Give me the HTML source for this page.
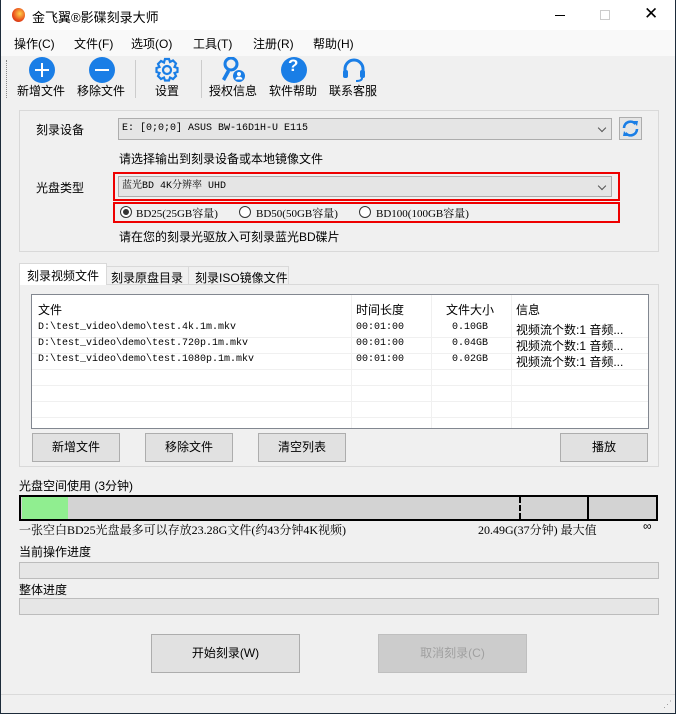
<!DOCTYPE html>
<html><head><meta charset="utf-8"><style>
*{margin:0;padding:0;box-sizing:border-box}
body{width:676px;height:714px;background:#1d2b3a;font-family:"Liberation Sans","Noto Sans CJK SC",sans-serif;font-size:12px;color:#000;overflow:hidden;position:relative}
.win{position:absolute;left:1px;top:0;width:674px;height:713px;background:#f0f0f0}
.a{position:absolute;white-space:nowrap}
.box{position:absolute;border:1px solid #d9d9d9}
.combo{position:absolute;background:#e5e5e5;border:1px solid #adadad;font-family:"Liberation Mono","Noto Serif CJK SC",monospace;font-size:10px;line-height:20px;padding-left:3px}
.combo:after{content:"";position:absolute;right:6px;top:6px;width:5px;height:5px;border-right:1px solid #555;border-bottom:1px solid #555;transform:rotate(45deg)}
.btn{position:absolute;background:#e1e1e1;border:1px solid #adadad;text-align:center;font-size:12px}
.ic{position:absolute;width:26px;height:26px;border-radius:50%;background:#1a7ee6}
.tl{position:absolute;font-size:12px;text-align:center;width:60px}
.radio{position:absolute;width:12px;height:12px;border:1px solid #333;border-radius:50%;background:#fff}
.mono{font-family:"Liberation Serif","Noto Serif CJK SC",serif;font-size:11px}
.lm{font-family:"Liberation Mono","Noto Serif CJK SC",monospace;font-size:10px}
</style></head><body><div class="win">
<div class="a" style="left:0;top:0;width:674px;height:30px;background:#fff"></div>
<div class="a" style="left:11px;top:8px;width:13px;height:14px;border-radius:50%;background:radial-gradient(circle at 60% 40%,#ffd04a,#e84a1a 60%,#b02010)"></div>
<div class="a" style="left:31px;top:7px;font-size:13px">金飞翼®影碟刻录大师</div>
<div class="a" style="left:554px;top:15px;width:10px;height:1px;background:#000"></div>
<div class="a" style="left:599px;top:10px;width:10px;height:10px;border:1px solid #ccc"></div>
<div class="a" style="left:643px;top:4px;font-size:17px;font-weight:300">✕</div>
<div class="a" style="left:0;top:30px;width:674px;height:26px;background:#f9f9f9"></div>
<div class="a" style="left:13px;top:35px">操作(C)</div>
<div class="a" style="left:73px;top:35px">文件(F)</div>
<div class="a" style="left:130px;top:35px">选项(O)</div>
<div class="a" style="left:192px;top:35px">工具(T)</div>
<div class="a" style="left:252px;top:35px">注册(R)</div>
<div class="a" style="left:312px;top:35px">帮助(H)</div>
<div class="a" style="left:5px;top:60px;height:38px;border-left:1px dotted #888"></div>
<div class="ic" style="left:28px;top:57px"></div><div class="a" style="left:34px;top:69px;width:14px;height:2px;background:#fff"></div><div class="a" style="left:40px;top:63px;width:2px;height:14px;background:#fff"></div>
<div class="ic" style="left:88px;top:57px"></div><div class="a" style="left:94px;top:69px;width:14px;height:2px;background:#fff"></div>
<div class="a" style="left:134px;top:60px;width:1px;height:38px;background:#ccc"></div>
<svg class="a" style="left:153px;top:57px" width="26" height="26" viewBox="0 0 26 26"><g fill="none" stroke="#1a7ee6" stroke-width="2.2"><circle cx="13" cy="13" r="4"/><path d="M11 2h4l1 3 3-1.5 3 3L20.5 10l3 1v4l-3 1 1.5 3-3 3-3-1.5-1 3h-4l-1-3-3 1.5-3-3L5.5 16l-3-1v-4l3-1L4 7l3-3 3 1.5z"/></g></svg>
<div class="a" style="left:200px;top:60px;width:1px;height:38px;background:#ccc"></div>
<svg class="a" style="left:219px;top:57px" width="26" height="26" viewBox="0 0 26 26"><circle cx="11" cy="7" r="6" fill="none" stroke="#1a7ee6" stroke-width="3"/><path d="M8 11 2 22l3 2 5-9" fill="#1a7ee6"/><circle cx="19" cy="19" r="6" fill="#1a7ee6"/><circle cx="19" cy="17" r="2" fill="#fff"/><path d="M15.5 22.5a3.5 3 0 0 1 7 0z" fill="#fff"/></svg>
<div class="ic" style="left:280px;top:57px"></div><div class="a" style="left:287px;top:56px;color:#fff;font-weight:bold;font-size:17px">?</div>
<svg class="a" style="left:340px;top:57px" width="26" height="26" viewBox="0 0 26 26"><path d="M4 15v-3a9 9 0 0 1 18 0v3" fill="none" stroke="#1a7ee6" stroke-width="3"/><rect x="2" y="13" width="5" height="8" rx="2" fill="#1a7ee6"/><rect x="19" y="13" width="5" height="8" rx="2" fill="#1a7ee6"/><path d="M21 21q0 3-6 3" fill="none" stroke="#1a7ee6" stroke-width="2"/></svg>
<div class="tl" style="left:10px;top:82px">新增文件</div>
<div class="tl" style="left:70px;top:82px">移除文件</div>
<div class="tl" style="left:136px;top:82px">设置</div>
<div class="tl" style="left:202px;top:82px">授权信息</div>
<div class="tl" style="left:262px;top:82px">软件帮助</div>
<div class="tl" style="left:322px;top:82px">联系客服</div>
<div class="box" style="left:18px;top:110px;width:640px;height:142px"></div>
<div class="a" style="left:35px;top:121px">刻录设备</div>
<div class="combo" style="left:117px;top:118px;width:494px;height:22px">E:  [0;0;0] ASUS BW-16D1H-U E115</div>
<div class="a" style="left:618px;top:117px;width:23px;height:23px;border:1px solid #adadad;background:#e5e5e5"></div>
<svg class="a" style="left:621px;top:120px" width="17" height="17" viewBox="0 0 17 17"><path d="M2 8a6.5 6.5 0 0 1 11.5-4M15 9a6.5 6.5 0 0 1-11.5 4" fill="none" stroke="#1a7ee6" stroke-width="2.6"/><path d="M11 1l5 0-1 5z M6 16l-5 0 1-5z" fill="#1a7ee6"/></svg>
<div class="a" style="left:118px;top:150px">请选择输出到刻录设备或本地镜像文件</div>
<div class="a" style="left:35px;top:179px">光盘类型</div>
<div class="a" style="left:112px;top:172px;width:507px;height:29px;border:2px solid #e00"></div>
<div class="combo" style="left:117px;top:176px;width:494px;height:21px;line-height:19px">蓝光BD 4K分辨率 UHD</div>
<div class="a" style="left:112px;top:202px;width:507px;height:21px;border:2px solid #e00"></div>
<div class="radio" style="left:119px;top:206px"></div><div class="a" style="left:122px;top:209px;width:6px;height:6px;border-radius:50%;background:#333"></div>
<div class="a mono" style="left:135px;top:205px">BD25(25GB容量)</div>
<div class="radio" style="left:238px;top:206px"></div><div class="a mono" style="left:255px;top:205px">BD50(50GB容量)</div>
<div class="radio" style="left:358px;top:206px"></div><div class="a mono" style="left:375px;top:205px">BD100(100GB容量)</div>
<div class="a" style="left:118px;top:228px">请在您的刻录光驱放入可刻录蓝光BD碟片</div>
<div class="a" style="left:18px;top:284px;width:640px;height:183px;background:#fff;border:1px solid #d9d9d9"></div>
<div class="a" style="left:18px;top:263px;width:88px;height:23px;background:#fff;border:1px solid #d9d9d9;border-bottom:none;padding:3px 0 0 7px">刻录视频文件</div>
<div class="a" style="left:105px;top:266px;width:83px;height:19px;border:1px solid #d9d9d9;padding:2px 0 0 4px">刻录原盘目录</div>
<div class="a" style="left:187px;top:266px;width:101px;height:19px;border:1px solid #d9d9d9;padding:2px 0 0 6px">刻录ISO镜像文件</div>
<div class="a" style="left:19px;top:285px;width:638px;height:181px;background:#f0f0f0"></div>
<div class="a" style="left:30px;top:294px;width:618px;height:135px;background:#fff;border:1px solid #828790"></div>
<div class="a" style="left:350px;top:295px;width:1px;height:133px;background:#f0f0f0"></div>
<div class="a" style="left:430px;top:295px;width:1px;height:133px;background:#f0f0f0"></div>
<div class="a" style="left:510px;top:295px;width:1px;height:133px;background:#f0f0f0"></div>
<div class="a" style="left:31px;top:337px;width:616px;height:1px;background:#f0f0f0"></div>
<div class="a" style="left:31px;top:353px;width:616px;height:1px;background:#f0f0f0"></div>
<div class="a" style="left:31px;top:369px;width:616px;height:1px;background:#f0f0f0"></div>
<div class="a" style="left:31px;top:385px;width:616px;height:1px;background:#f0f0f0"></div>
<div class="a" style="left:31px;top:401px;width:616px;height:1px;background:#f0f0f0"></div>
<div class="a" style="left:31px;top:417px;width:616px;height:1px;background:#f0f0f0"></div>
<div class="a" style="left:37px;top:301px">文件</div><div class="a" style="left:355px;top:301px">时间长度</div><div class="a" style="left:445px;top:301px">文件大小</div><div class="a" style="left:515px;top:301px">信息</div>
<div class="a lm" style="left:37px;top:322px">D:\test_video\demo\test.4k.1m.mkv</div>
<div class="a lm" style="left:37px;top:338px">D:\test_video\demo\test.720p.1m.mkv</div>
<div class="a lm" style="left:37px;top:354px">D:\test_video\demo\test.1080p.1m.mkv</div>
<div class="a lm" style="left:355px;top:322px">00:01:00</div><div class="a lm" style="left:355px;top:338px">00:01:00</div><div class="a lm" style="left:355px;top:354px">00:01:00</div>
<div class="a lm" style="left:451px;top:322px">0.10GB</div><div class="a lm" style="left:451px;top:338px">0.04GB</div><div class="a lm" style="left:451px;top:354px">0.02GB</div>
<div class="a" style="left:515px;top:321px">视频流个数:1 音频...</div><div class="a" style="left:515px;top:337px">视频流个数:1 音频...</div><div class="a" style="left:515px;top:353px">视频流个数:1 音频...</div>
<div class="btn" style="left:31px;top:433px;width:88px;height:29px;line-height:27px">新增文件</div>
<div class="btn" style="left:144px;top:433px;width:88px;height:29px;line-height:27px">移除文件</div>
<div class="btn" style="left:257px;top:433px;width:88px;height:29px;line-height:27px">清空列表</div>
<div class="btn" style="left:559px;top:433px;width:88px;height:29px;line-height:27px">播放</div>
<div class="a" style="left:18px;top:477px">光盘空间使用 (3分钟)</div>
<div class="a" style="left:18px;top:495px;width:639px;height:26px;background:#d3d3d3;border:2px solid #000"></div>
<div class="a" style="left:21px;top:497px;width:46px;height:22px;background:#90ee90"></div>
<div class="a" style="left:518px;top:497px;height:22px;border-left:2px dashed #000"></div>
<div class="a" style="left:586px;top:497px;width:2px;height:22px;background:#000"></div>
<div class="a mono" style="left:18px;top:521px;font-size:12px">一张空白BD25光盘最多可以存放23.28G文件(约43分钟4K视频)</div>
<div class="a mono" style="left:477px;top:521px;font-size:12px">20.49G(37分钟) 最大值</div>
<div class="a" style="left:642px;top:519px">∞</div>
<div class="a" style="left:18px;top:543px">当前操作进度</div>
<div class="a" style="left:18px;top:562px;width:640px;height:17px;background:#e6e6e6;border:1px solid #bcbcbc"></div>
<div class="a" style="left:18px;top:581px">整体进度</div>
<div class="a" style="left:18px;top:598px;width:640px;height:17px;background:#e6e6e6;border:1px solid #bcbcbc"></div>
<div class="btn" style="left:150px;top:634px;width:149px;height:39px;line-height:37px">开始刻录(W)</div>
<div class="btn" style="left:377px;top:634px;width:149px;height:39px;line-height:37px;background:#ccc;border-color:#bfbfbf;color:#a0a0a0">取消刻录(C)</div>
<div class="a" style="left:0;top:694px;width:674px;height:1px;background:#dadada"></div>
<div class="a" style="left:662px;top:700px;color:#999;font-size:9px;line-height:8px">⋰</div>
</div></body></html>
